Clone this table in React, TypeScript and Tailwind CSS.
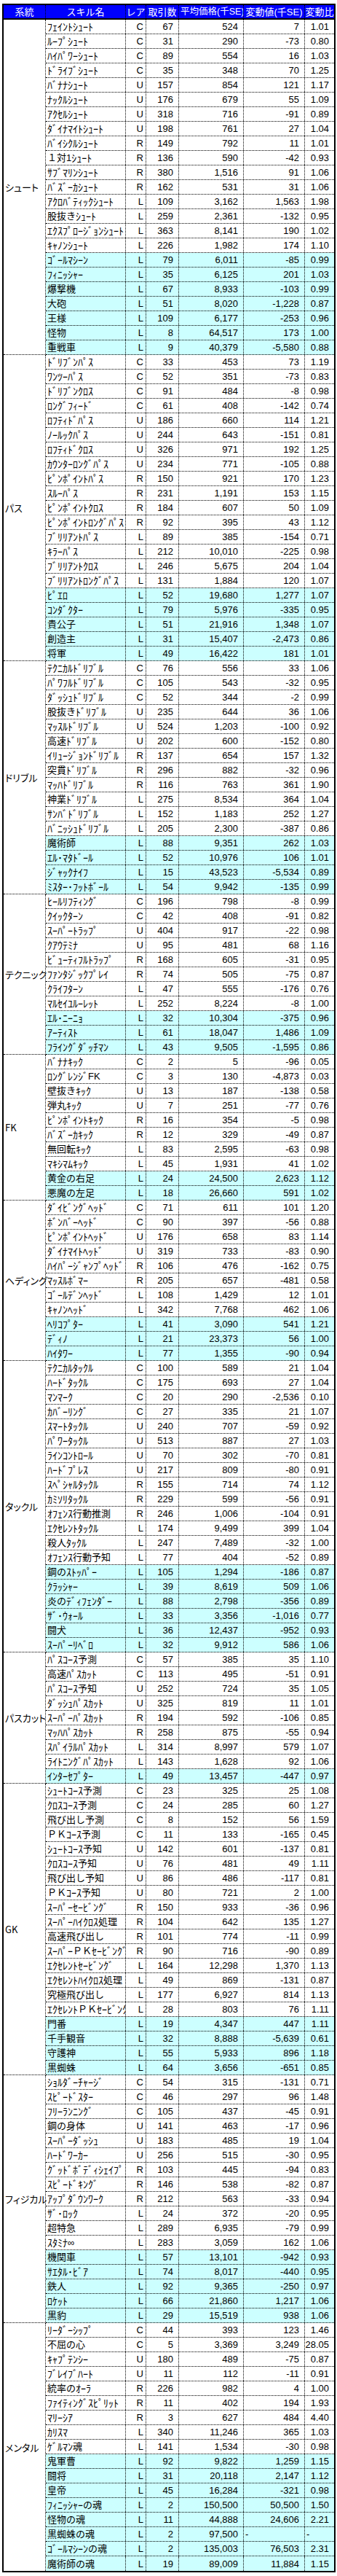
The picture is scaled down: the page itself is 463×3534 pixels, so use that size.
type Row = {
  name: string;
  rarity: string;
  count: string;
  price: string;
  diff: string;
  ratio: string;
  hl: boolean;
};

// each line: name|rarity|count|price|diff|ratio  (a trailing * marks a cyan row)
const raw: [string, string][] = [
  [
    'シュート',
    `ﾌｪｲﾝﾄｼｭｰﾄ|C|67|524|7|1.01
ﾙｰﾌﾟｼｭｰﾄ|C|31|290|-73|0.80
ﾊｲﾊﾟﾜｰｼｭｰﾄ|C|89|554|16|1.03
ﾄﾞﾗｲﾌﾞｼｭｰﾄ|C|35|348|70|1.25
ﾊﾞﾅﾅｼｭｰﾄ|U|157|854|121|1.17
ﾅｯｸﾙｼｭｰﾄ|U|176|679|55|1.09
ｱｸｾﾙｼｭｰﾄ|U|318|716|-91|0.89
ﾀﾞｲﾅﾏｲﾄｼｭｰﾄ|U|198|761|27|1.04
ﾊﾞｲｼｸﾙｼｭｰﾄ|R|149|792|11|1.01
１対1ｼｭｰﾄ|R|136|590|-42|0.93
ｻﾌﾞﾏﾘﾝｼｭｰﾄ|R|380|1,516|91|1.06
ﾊﾞｽﾞｰｶｼｭｰﾄ|R|162|531|31|1.06
ｱｸﾛﾊﾞﾃｨｯｸｼｭｰﾄ|L|109|3,162|1,563|1.98
股抜きｼｭｰﾄ|L|259|2,361|-132|0.95
ｴｸｽﾌﾟﾛｰｼﾞｮﾝｼｭｰﾄ|L|363|8,141|190|1.02
ｷｬﾉﾝｼｭｰﾄ|L|226|1,982|174|1.10
ｺﾞｰﾙﾏｼｰﾝ|L|79|6,011|-85|0.99*
ﾌｨﾆｯｼｬｰ|L|35|6,125|201|1.03*
爆撃機|L|67|8,933|-103|0.99*
大砲|L|51|8,020|-1,228|0.87*
王様|L|109|6,177|-253|0.96*
怪物|L|8|64,517|173|1.00*
重戦車|L|9|40,379|-5,580|0.88*`,
  ],
  [
    'パス',
    `ﾄﾞﾘﾌﾞﾝﾊﾟｽ|C|33|453|73|1.19
ﾜﾝﾂｰﾊﾟｽ|C|52|351|-73|0.83
ﾄﾞﾘﾌﾞﾝｸﾛｽ|C|91|484|-8|0.98
ﾛﾝｸﾞﾌｨｰﾄﾞ|C|61|408|-142|0.74
ﾛﾌﾃｨﾄﾞﾊﾟｽ|U|186|660|114|1.21
ﾉｰﾙｯｸﾊﾟｽ|U|244|643|-151|0.81
ﾛﾌﾃｨﾄﾞｸﾛｽ|U|326|971|192|1.25
ｶｳﾝﾀｰﾛﾝｸﾞﾊﾟｽ|U|234|771|-105|0.88
ﾋﾟﾝﾎﾟｲﾝﾄﾊﾟｽ|R|150|921|170|1.23
ｽﾙｰﾊﾟｽ|R|231|1,191|153|1.15
ﾋﾟﾝﾎﾟｲﾝﾄｸﾛｽ|R|184|607|50|1.09
ﾋﾟﾝﾎﾟｲﾝﾄﾛﾝｸﾞﾊﾟｽ|R|92|395|43|1.12
ﾌﾞﾘﾘｱﾝﾄﾊﾟｽ|L|89|385|-154|0.71
ｷﾗｰﾊﾟｽ|L|212|10,010|-225|0.98
ﾌﾞﾘﾘｱﾝﾄｸﾛｽ|L|246|5,675|204|1.04
ﾌﾞﾘﾘｱﾝﾄﾛﾝｸﾞﾊﾟｽ|L|131|1,884|120|1.07
ﾋﾟｴﾛ|L|52|19,680|1,277|1.07*
ｺﾝﾀﾞｸﾀｰ|L|79|5,976|-335|0.95*
貴公子|L|51|21,916|1,348|1.07*
創造主|L|31|15,407|-2,473|0.86*
将軍|L|49|16,422|181|1.01*`,
  ],
  [
    'ドリブル',
    `ﾃｸﾆｶﾙﾄﾞﾘﾌﾞﾙ|C|76|556|33|1.06
ﾊﾟﾜﾌﾙﾄﾞﾘﾌﾞﾙ|C|105|543|-32|0.95
ﾀﾞｯｼｭﾄﾞﾘﾌﾞﾙ|C|52|344|-2|0.99
股抜きﾄﾞﾘﾌﾞﾙ|U|235|644|36|1.06
ﾏｯｽﾙﾄﾞﾘﾌﾞﾙ|U|524|1,203|-100|0.92
高速ﾄﾞﾘﾌﾞﾙ|U|202|600|-152|0.80
ｲﾘｭｰｼﾞｮﾝﾄﾞﾘﾌﾞﾙ|R|137|654|157|1.32
突貫ﾄﾞﾘﾌﾞﾙ|R|296|882|-32|0.96
ﾏｯﾊﾄﾞﾘﾌﾞﾙ|R|116|763|361|1.90
神業ﾄﾞﾘﾌﾞﾙ|L|275|8,534|364|1.04
ｻﾝﾊﾞﾄﾞﾘﾌﾞﾙ|L|152|1,183|252|1.27
ﾊﾞﾆｯｼｭﾄﾞﾘﾌﾞﾙ|L|205|2,300|-387|0.86
魔術師|L|88|9,351|262|1.03*
ｴﾙ･ﾏﾀﾄﾞｰﾙ|L|52|10,976|106|1.01*
ｼﾞｬｯｸﾅｲﾌ|L|15|43,523|-5,534|0.89*
ﾐｽﾀｰ･ﾌｯﾄﾎﾞｰﾙ|L|54|9,942|-135|0.99*`,
  ],
  [
    'テクニック',
    `ﾋｰﾙﾘﾌﾃｨﾝｸﾞ|C|196|798|-8|0.99
ｸｲｯｸﾀｰﾝ|C|42|408|-91|0.82
ｽｰﾊﾟｰﾄﾗｯﾌﾟ|U|404|917|-22|0.98
ｸｱｳﾃﾐﾅ|U|95|481|68|1.16
ﾋﾞｭｰﾃｨﾌﾙﾄﾗｯﾌﾟ|R|168|605|-31|0.95
ﾌｧﾝﾀｼﾞｯｸﾌﾟﾚｲ|R|74|505|-75|0.87
ｸﾗｲﾌﾀｰﾝ|L|47|555|-176|0.76
ﾏﾙｾｲﾕﾙｰﾚｯﾄ|L|252|8,224|-8|1.00
ｴﾙ･ﾆｰﾆｮ|L|32|10,304|-375|0.96*
ｱｰﾃｨｽﾄ|L|61|18,047|1,486|1.09*
ﾌﾗｲﾝｸﾞﾀﾞｯﾁﾏﾝ|L|43|9,505|-1,595|0.86*`,
  ],
  [
    'FK',
    `ﾊﾞﾅﾅｷｯｸ|C|2|5|-96|0.05
ﾛﾝｸﾞﾚﾝｼﾞFK|C|3|130|-4,873|0.03
壁抜きｷｯｸ|U|13|187|-138|0.58
弾丸ｷｯｸ|U|7|251|-77|0.76
ﾋﾟﾝﾎﾟｲﾝﾄｷｯｸ|R|16|354|-5|0.98
ﾊﾞｽﾞｰｶｷｯｸ|R|12|329|-49|0.87
無回転ｷｯｸ|L|83|2,595|-63|0.98
ﾏｷｼﾏﾑｷｯｸ|L|45|1,931|41|1.02
黄金の右足|L|24|24,500|2,623|1.12*
悪魔の左足|L|18|26,660|591|1.02*`,
  ],
  [
    'ヘディング',
    `ﾀﾞｲﾋﾞﾝｸﾞﾍｯﾄﾞ|C|71|611|101|1.20
ﾎﾞﾝﾊﾞｰﾍｯﾄﾞ|C|90|397|-56|0.88
ﾋﾟﾝﾎﾟｲﾝﾄﾍｯﾄﾞ|U|176|658|83|1.14
ﾀﾞｲﾅﾏｲﾄﾍｯﾄﾞ|U|319|733|-83|0.90
ﾊｲﾊﾟｰｼﾞｬﾝﾌﾟﾍｯﾄﾞ|R|106|476|-162|0.75
ﾏｯｽﾙﾎﾞﾏｰ|R|205|657|-481|0.58
ｺﾞｰﾙﾃﾞﾝﾍｯﾄﾞ|L|108|1,429|12|1.01
ｷｬﾉﾝﾍｯﾄﾞ|L|342|7,768|462|1.06
ﾍﾘｺﾌﾟﾀｰ|L|41|3,090|541|1.21*
ﾃﾞｨﾉ|L|21|23,373|56|1.00*
ﾊｲﾀﾜｰ|L|77|1,355|-90|0.94*`,
  ],
  [
    'タックル',
    `ﾃｸﾆｶﾙﾀｯｸﾙ|C|100|589|21|1.04
ﾊｰﾄﾞﾀｯｸﾙ|C|175|693|27|1.04
ﾏﾝﾏｰｸ|C|20|290|-2,536|0.10
ｶﾊﾞｰﾘﾝｸﾞ|C|27|335|21|1.07
ｽﾏｰﾄﾀｯｸﾙ|U|240|707|-59|0.92
ﾊﾟﾜｰﾀｯｸﾙ|U|513|887|27|1.03
ﾗｲﾝｺﾝﾄﾛｰﾙ|U|70|302|-70|0.81
ﾊｰﾄﾞﾌﾟﾚｽ|U|217|809|-80|0.91
ｽﾍﾟｼｬﾙﾀｯｸﾙ|R|155|714|74|1.12
ｶﾐｿﾘﾀｯｸﾙ|R|229|599|-56|0.91
ｵﾌｪﾝｽ行動推測|R|246|1,006|-104|0.91
ｴｸｾﾚﾝﾄﾀｯｸﾙ|L|174|9,499|399|1.04
殺人ﾀｯｸﾙ|L|247|7,489|-32|1.00
ｵﾌｪﾝｽ行動予知|L|77|404|-52|0.89
鋼のｽﾄｯﾊﾟｰ|L|105|1,294|-186|0.87*
ｸﾗｯｼｬｰ|L|39|8,619|509|1.06*
炎のﾃﾞｨﾌｪﾝﾀﾞｰ|L|88|2,798|-356|0.89*
ｻﾞ･ｳｫｰﾙ|L|33|3,356|-1,016|0.77*
闘犬|L|36|12,437|-952|0.93*
ｽｰﾊﾟｰﾘﾍﾞﾛ|L|32|9,912|586|1.06*`,
  ],
  [
    'パスカット',
    `ﾊﾟｽｺｰｽ予測|C|57|385|35|1.10
高速ﾊﾟｽｶｯﾄ|C|113|495|-51|0.91
ﾊﾟｽｺｰｽ予知|U|252|724|35|1.05
ﾀﾞｯｼｭﾊﾟｽｶｯﾄ|U|325|819|11|1.01
ｽｰﾊﾟｰﾊﾟｽｶｯﾄ|R|194|592|-106|0.85
ﾏｯﾊﾊﾟｽｶｯﾄ|R|258|875|-55|0.94
ｽﾊﾟｲﾗﾙﾊﾟｽｶｯﾄ|L|314|8,997|579|1.07
ﾗｲﾄﾆﾝｸﾞﾊﾟｽｶｯﾄ|L|143|1,628|92|1.06
ｲﾝﾀｰｾﾌﾟﾀｰ|L|49|13,457|-447|0.97*`,
  ],
  [
    'GK',
    `ｼｭｰﾄｺｰｽ予測|C|23|325|25|1.08
ｸﾛｽｺｰｽ予測|C|24|285|60|1.27
飛び出し予測|C|8|152|56|1.59
ＰＫｺｰｽ予測|C|11|133|-165|0.45
ｼｭｰﾄｺｰｽ予知|U|142|601|-137|0.81
ｸﾛｽｺｰｽ予知|U|76|481|49|1.11
飛び出し予知|U|86|486|-117|0.81
ＰＫｺｰｽ予知|U|80|721|2|1.00
ｽｰﾊﾟｰｾｰﾋﾞﾝｸﾞ|R|150|933|-36|0.96
ｽｰﾊﾟｰﾊｲｸﾛｽ処理|R|104|642|135|1.27
高速飛び出し|R|101|774|-11|0.99
ｽｰﾊﾟｰＰＫｾｰﾋﾞﾝｸﾞ|R|90|716|-90|0.89
ｴｸｾﾚﾝﾄｾｰﾋﾞﾝｸﾞ|L|164|12,298|1,370|1.13
ｴｸｾﾚﾝﾄﾊｲｸﾛｽ処理|L|49|869|-131|0.87
究極飛び出し|L|177|6,927|814|1.13
ｴｸｾﾚﾝﾄＰＫｾｰﾋﾞﾝｸﾞ|L|28|803|76|1.11
門番|L|19|4,347|447|1.11*
千手観音|L|32|8,888|-5,639|0.61*
守護神|L|55|5,933|896|1.18*
黒蜘蛛|L|64|3,656|-651|0.85*`,
  ],
  [
    'フィジカル',
    `ｼｮﾙﾀﾞｰﾁｬｰｼﾞ|C|54|315|-131|0.71
ｽﾋﾟｰﾄﾞｽﾀｰ|C|46|297|96|1.48
ﾌﾘｰﾗﾝﾆﾝｸﾞ|C|105|437|-45|0.91
鋼の身体|U|141|463|-17|0.96
ｽｰﾊﾟｰﾀﾞｯｼｭ|U|183|485|19|1.04
ﾊｰﾄﾞﾜｰｶｰ|U|256|515|-30|0.95
ｸﾞｯﾄﾞﾎﾞﾃﾞｨｼｪｲﾌﾟ|R|103|445|-94|0.83
ｽﾋﾟｰﾄﾞｷﾝｸﾞ|R|146|538|-82|0.87
ｱｯﾌﾟﾀﾞｳﾝﾜｰｸ|R|212|563|-33|0.94
ｻﾞ･ﾛｯｸ|L|24|372|-20|0.95
超特急|L|289|6,935|-79|0.99
ｽﾀﾐﾅ∞|L|283|3,059|162|1.06
機関車|L|57|13,101|-942|0.93*
ｻｴﾀﾙ･ﾋﾞｱ|L|74|8,017|-440|0.95*
鉄人|L|92|9,365|-250|0.97*
ﾛｹｯﾄ|L|66|21,860|1,217|1.06*
黒豹|L|29|15,519|938|1.06*`,
  ],
  [
    'メンタル',
    `ﾘｰﾀﾞｰｼｯﾌﾟ|C|44|393|123|1.46
不屈の心|C|5|3,369|3,249|28.05
ｷｬﾌﾟﾃﾝｼｰ|U|180|489|-75|0.87
ﾌﾞﾚｲﾌﾞﾊｰﾄ|U|11|112|-11|0.91
統率のｵｰﾗ|R|226|982|4|1.00
ﾌｧｲﾃｨﾝｸﾞｽﾋﾟﾘｯﾄ|R|11|402|194|1.93
ﾏﾘｰｼｱ|R|3|627|484|4.40
ｶﾘｽﾏ|L|340|11,246|365|1.03
ｹﾞﾙﾏﾝ魂|L|141|1,534|-30|0.98
鬼軍曹|L|92|9,822|1,259|1.15*
闘将|L|31|20,118|2,147|1.12*
皇帝|L|45|16,284|-321|0.98*
ﾌｨﾆｯｼｬｰの魂|L|2|150,500|50,500|1.50*
怪物の魂|L|11|44,888|24,606|2.21*
黒蜘蛛の魂|L|2|97,500|-|-*
ｺﾞｰﾙﾏｼｰﾝの魂|L|2|135,003|76,503|2.31*
魔術師の魂|L|19|89,009|11,884|1.15*`,
  ],
];

const groups = raw.map(([name, body]) => ({
  name,
  rows: body.split('\n').map((line): Row => {
    const hl = line.endsWith('*');
    const [n, rarity, count, price, diff, ratio] = (hl ? line.slice(0, -1) : line).split('|');
    return { name: n, rarity, count, price, diff, ratio, hl };
  }),
}));

const font = "font-['Liberation_Sans','Noto_Sans_CJK_JP',sans-serif]";
const dot = 'border-r border-dotted border-black';

// half-width kana runs are drawn a bit larger, like the sheet's bitmap font
function SkillName({ text }: { text: string }) {
  const parts = text.split(/([\uFF61-\uFF9F]+)/).filter(Boolean);
  return (
    <>
      {parts.map((p, i) =>
        /[\uFF61-\uFF9F]/.test(p) ? (
          <span key={i} className="text-[14px]">{p}</span>
        ) : (
          <span key={i}>{p}</span>
        ),
      )}
    </>
  );
}

function Num({ value, className }: { value: string; className: string }) {
  // text cells ("-") sit on the left like in the sheet
  if (value === '-') {
    return <div className={`${className} pl-[2px] text-left`}>-</div>;
  }
  return <div className={`${className} pr-[7px] text-right`}>{value}</div>;
}

export default function App() {
  return (
    <div className={`bg-white pt-[5px] pl-[3px] text-[13px] leading-none text-black ${font}`}>
      <div className="w-[458px] border-2 border-black">
        {/* header */}
        <div className="flex h-[20px] border-b-2 border-black bg-[#0000ff] text-white whitespace-nowrap">
          <div className={`w-[58px] ${dot} flex items-center justify-center`}>系統</div>
          <div className={`w-[110px] ${dot} flex items-center justify-center`}>スキル名</div>
          <div className={`w-[28px] ${dot} flex items-center justify-center overflow-hidden`}>レア</div>
          <div className={`w-[45px] ${dot} flex items-center justify-center overflow-hidden`}>取引数</div>
          <div className={`w-[89px] ${dot} flex items-center overflow-hidden pl-[2px] text-[12.5px]`}>平均価格(千SE)</div>
          <div className={`w-[84px] ${dot} flex items-center justify-center overflow-hidden`}>変動値(千SE)</div>
          <div className="flex-1 flex items-center justify-center overflow-hidden">変動比</div>
        </div>

        {groups.map((g, gi) => {
          const last = gi === groups.length - 1;
          return (
            <div key={g.name} className="flex">
              <div
                className={`w-[58px] shrink-0 ${dot} ${last ? '' : 'border-b border-dotted'} flex items-center pl-[2px] whitespace-nowrap [font-feature-settings:'palt'] font-['Noto_Sans_CJK_JP',sans-serif]`}
              >
                {g.name}
              </div>
              <div className="flex-1">
                {g.rows.map((r, ri) => {
                  const end = last && ri === g.rows.length - 1;
                  return (
                    <div
                      key={ri}
                      className={`flex h-[20px] items-center whitespace-nowrap ${end ? '' : 'border-b border-dotted border-black'} ${r.hl ? 'bg-[#ccffff]' : ''}`}
                    >
                      <div className={`w-[110px] h-full ${dot} flex items-center pl-[2px] overflow-hidden`}>
                        <SkillName text={r.name} />
                      </div>
                      <div className={`w-[28px] h-full ${dot} flex items-center justify-end pr-[3px]`}>{r.rarity}</div>
                      <Num value={r.count} className={`w-[45px] h-full ${dot} flex items-center justify-end`} />
                      <Num value={r.price} className={`w-[89px] h-full ${dot} flex items-center justify-end`} />
                      <Num value={r.diff} className={`w-[84px] h-full ${dot} flex items-center ${r.diff === '-' ? '' : 'justify-end'}`} />
                      <Num value={r.ratio} className={`flex-1 h-full flex items-center ${r.ratio === '-' ? '' : 'justify-end'}`} />
                    </div>
                  );
                })}
              </div>
            </div>
          );
        })}
      </div>
    </div>
  );
}
